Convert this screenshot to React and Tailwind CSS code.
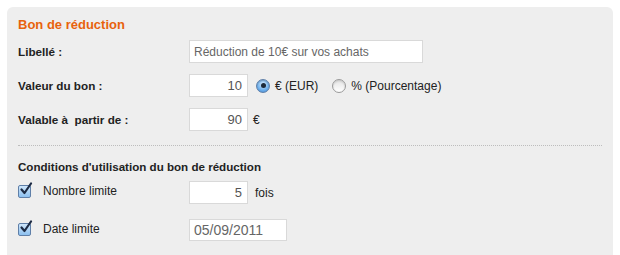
import React from 'react';

const Radio = ({ checked }) =>
  checked ? (
    <span className="inline-flex h-[14px] w-[14px] items-center justify-center rounded-full border border-[#5f7fa8] bg-[radial-gradient(circle_at_50%_35%,#d6ecff,#6fb0ec_60%,#3b82cf)] shadow-[inset_0_1px_1px_rgba(0,0,0,0.2)]">
      <span className="h-[5px] w-[5px] rounded-full bg-[#1c2a3a]"></span>
    </span>
  ) : (
    <span className="inline-block h-[14px] w-[14px] rounded-full border border-[#9a9a9a] bg-[linear-gradient(#e4e4e4,#ffffff)] shadow-[inset_0_1px_2px_rgba(0,0,0,0.15)]"></span>
  );

const Check = () => (
  <span className="relative inline-block h-[14px] w-[14px]">
    <span className="absolute left-0 top-[1px] h-[13px] w-[13px] rounded-[2px] border border-[#5f7fa8] bg-[linear-gradient(#cfe6fb,#8cc0ef)]"></span>
    <svg className="absolute left-[1px] top-[-2px]" width="14" height="14" viewBox="0 0 14 14">
      <path d="M2.5 7.5 L5.5 11 L12 1.5" fill="none" stroke="#1d2b44" strokeWidth="2.2" strokeLinecap="round" strokeLinejoin="round" />
    </svg>
  </span>
);

const Field = ({ value, className }) => (
  <div className={`flex items-center border border-[#d9d9d9] bg-white ${className}`}>{value}</div>
);

export default function App() {
  return (
    <div className="min-h-[255px] bg-white pl-[7px] pr-[7px] pt-[7px] font-['Liberation_Sans',Arial,sans-serif] text-[#222]">
      <div className="h-[248px] rounded-t-[6px] bg-[#eeeeee] px-[11px] pt-[8px]">
        <div className="flex h-[20px] items-center text-[13px] font-bold text-[#e8620c]">Bon de réduction</div>

        <div className="mt-[5px] flex h-[23px] items-center">
          <div className="w-[171px] text-[11.7px] font-bold">Libellé :</div>
          <Field value="Réduction de 10€ sur vos achats" className="h-[23px] w-[234px] pl-[4px] text-[12px] text-[#666]" />
        </div>

        <div className="mt-[11px] flex h-[23px] items-center">
          <div className="w-[171px] text-[11.7px] font-bold">Valeur du bon :</div>
          <Field value="10" className="h-[23px] w-[59px] justify-end pr-[5px] text-[13px] text-[#555]" />
          <div className="ml-[8px] flex items-center gap-[5px] text-[12px]">
            <Radio checked />
            <span>€ (EUR)</span>
          </div>
          <div className="ml-[14px] flex items-center gap-[5px] text-[12px]">
            <Radio />
            <span>% (Pourcentage)</span>
          </div>
        </div>

        <div className="mt-[11px] flex h-[23px] items-center">
          <div className="w-[171px] text-[11.7px] font-bold">Valable à{'\u00a0'} partir de :</div>
          <Field value="90" className="h-[23px] w-[59px] justify-end pr-[5px] text-[13px] text-[#555]" />
          <span className="ml-[5px] text-[12px]">€</span>
        </div>

        <div className="mt-[14px] border-t border-dotted border-[#bdbdbd]"></div>

        <div className="mt-[13px] flex h-[16px] items-center text-[11.6px] font-bold">
          Conditions d'utilisation du bon de réduction
        </div>

        <div className="mt-[6px] flex h-[23px] items-start">
          <div className="flex w-[171px] items-center text-[12px]">
            <Check />
            <span className="ml-[11px] mt-[1px]">Nombre limite</span>
          </div>
          <Field value="5" className="h-[23px] w-[59px] justify-end pr-[5px] text-[13px] text-[#555]" />
          <span className="ml-[7px] self-center text-[12px]">fois</span>
        </div>

        <div className="mt-[15px] flex h-[22px] items-start">
          <div className="flex w-[171px] items-center text-[12px]">
            <Check />
            <span className="ml-[11px] mt-[1px]">Date limite</span>
          </div>
          <Field value="05/09/2011" className="h-[22px] w-[98px] pl-[4px] text-[14px] text-[#666]" />
        </div>
      </div>
    </div>
  );
}
